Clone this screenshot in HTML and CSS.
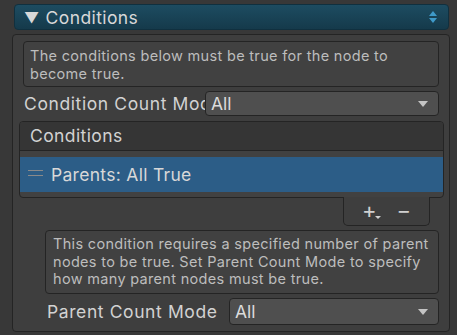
FILE: index.html
```html
<!DOCTYPE html>
<html lang="en">
<head>
    <meta name="viewport" content="width=device-width, initial-scale=1">
    <title>Conditions</title>
    <link rel="stylesheet" href="styles.css">
</head>
<body>
    <div class="inspector">
        <div class="foldout">
            <span class="fold-arrow">&#9660;</span>
            <span class="fold-title">Conditions</span>
            <svg class="sort-icon" width="10" height="14" viewBox="0 0 10 14">
                <path d="M5 1 L9 6 L1 6 Z M1 8 L9 8 L5 13 Z" fill="#3f9ac9"/>
            </svg>
        </div>
        <div class="panel">
            <div class="helpbox">The conditions below must be true for the node to become true.</div>
            <div class="field">
                <span class="label">Condition Count Mode</span>
                <div class="dropdown"><span>All</span><span class="caret"></span></div>
            </div>
            <div class="list">
                <div class="list-head">Conditions</div>
                <div class="list-body">
                    <div class="list-item selected">
                        <span class="handle"></span>
                        <span>Parents: All True</span>
                    </div>
                </div>
            </div>
            <div class="list-foot">
                <span class="btn">+<span class="mini-caret"></span></span>
                <span class="btn">&minus;</span>
            </div>
            <div class="nested">
                <div class="helpbox">This condition requires a specified number of parent nodes to be true. Set Parent Count Mode to specify how many parent nodes must be true.</div>
                <div class="field">
                    <span class="label short">Parent Count Mode</span>
                    <div class="dropdown"><span>All</span><span class="caret"></span></div>
                </div>
            </div>
        </div>
    </div>
</body>
</html>
```

FILE: styles.css
```css
html, body {
    margin: 0;
    padding: 0;
    background-color: #383838;
    font-family: Inter, "Noto Sans", sans-serif;
    color: #c4c4c4;
    overflow: hidden;
}
.inspector {
    padding: 4px 7px 0 12px;
}
.foldout {
    display: flex;
    align-items: center;
    height: 26px;
    margin-left: 2px;
    margin-right: 1px;
    padding: 0 10px 0 9px;
    box-sizing: border-box;
    border-radius: 4px;
    border: 1px solid #10303f;
    background: linear-gradient(#1d4c61, #153a4b);
    color: #d8d8d8;
    font-size: 17.5px;
    letter-spacing: 0.4px;
}
.fold-arrow {
    font-size: 15px;
    margin-right: 6px;
}
.fold-title {
    flex: 1;
}
.panel {
    margin-top: 4px;
    border: 1px solid #242424;
    border-radius: 4px;
    background-color: #3e3e3e;
    padding: 6px 10px 8px 5px;
    height: 298px;
    box-sizing: border-box;
}
.helpbox {
    margin-left: 5px;
    padding: 5px 6px 4px 6px;
    border: 1px solid #242424;
    border-radius: 4px;
    background-color: #414141;
    font-size: 14.5px;
    line-height: 17.5px;
    letter-spacing: 0.32px;
    color: #bdbdbd;
    min-height: 45px;
    box-sizing: border-box;
}
.field {
    display: flex;
    align-items: center;
    margin-top: 6px;
    height: 25px;
}
.label {
    width: 181px;
    margin-left: 6px;
    font-size: 17.5px;
    letter-spacing: 0.6px;
    white-space: nowrap;
    overflow: hidden;
    color: #d2d2d2;
}
.dropdown {
    flex: 1;
    display: flex;
    align-items: center;
    justify-content: space-between;
    height: 25px;
    box-sizing: border-box;
    padding: 0 10px 0 5px;
    border: 1px solid #242424;
    border-radius: 4px;
    background-color: #4f4f4f;
    font-size: 17.5px;
    color: #dcdcdc;
}
.caret {
    width: 0;
    height: 0;
    border-left: 5px solid transparent;
    border-right: 5px solid transparent;
    border-top: 6px solid #c4c4c4;
}
.list {
    margin: 5px -5px 0 1px;
    border: 1px solid #242424;
    border-radius: 4px;
    overflow: hidden;
    background-color: #414141;
}
.list-head {
    height: 28px;
    line-height: 28px;
    padding-left: 10px;
    background-color: #353535;
    border-bottom: 1px solid #242424;
    font-size: 17.5px;
    letter-spacing: 0.4px;
    color: #d2d2d2;
}
.list-body {
    padding: 6px 0 5px;
}
.list-item {
    display: flex;
    align-items: center;
    height: 35px;
    font-size: 17.5px;
    letter-spacing: 0.3px;
}
.list-item.selected {
    background-color: #2c5d87;
    color: #d8d8d8;
}
.handle {
    width: 15px;
    height: 4px;
    margin: 0 8px 4px 8px;
    border-top: 1px solid #8a8a8a;
    border-bottom: 1px solid #8a8a8a;
}
.list-foot {
    display: flex;
    justify-content: space-around;
    align-items: center;
    width: 87px;
    height: 29px;
    margin: -1px 9px 0 auto;
    box-sizing: border-box;
    border: 1px solid #242424;
    border-top: none;
    border-radius: 0 0 5px 5px;
    background-color: #3e3e3e;
    font-size: 22px;
    color: #d0d0d0;
    padding: 0 8px 2px;
}
.btn {
    position: relative;
}
.mini-caret {
    position: absolute;
    right: -4px;
    bottom: 4px;
    width: 0;
    height: 0;
    border-left: 3px solid transparent;
    border-right: 3px solid transparent;
    border-top: 3px solid #d0d0d0;
}
.nested {
    margin-left: 27px;
    margin-top: 4px;
}
.helpbox + .field {
    margin-top: 4px;
}
.nested .helpbox {
    min-height: 64px;
    margin-left: 0;
    padding: 4px 4px 4px 7px;
}
.nested .field {
    height: 27px;
    margin-top: 4px;
}
.nested .dropdown {
    height: 27px;
}
.label.short {
    width: 182px;
    margin-left: 2px;
}
```
